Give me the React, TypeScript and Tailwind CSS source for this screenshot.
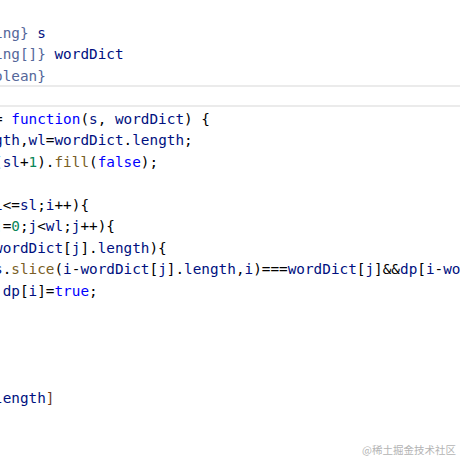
import React from 'react';

type Tok = [string, string];

const C = {
  kw: 'text-[#0000ff]',
  v: 'text-[#001080]',
  op: 'text-[#000000]',
  fn: 'text-[#795e26]',
  num: 'text-[#098658]',
  ty: 'text-[#55679a]',
  br: 'text-[#6b3a1a]',
};

// visible slice of the editor, starting one column left of the window
const lines: Tok[][] = [
  [],
  [['ing}', C.ty], [' ', C.op], ['s', C.v]],
  [['ing[]}', C.ty], [' ', C.op], ['wordDict', C.v]],
  [['olean}', C.ty]],
  [],
  [['= ', C.op], ['function', C.kw], ['(', C.op], ['s', C.v], [', ', C.op], ['wordDict', C.v], [') {', C.op]],
  [['gth', C.v], [',', C.op], ['wl', C.v], ['=', C.op], ['wordDict', C.v], ['.', C.op], ['length', C.v], [';', C.op]],
  [['(', C.op], ['sl', C.v], ['+', C.op], ['1', C.num], [').', C.op], ['fill', C.fn], ['(', C.op], ['false', C.kw], [');', C.op]],
  [],
  [['i', C.v], ['<=', C.op], ['sl', C.v], [';', C.op], ['i', C.v], ['++){', C.op]],
  [['j', C.v], ['=', C.op], ['0', C.num], [';', C.op], ['j', C.v], ['<', C.op], ['wl', C.v], [';', C.op], ['j', C.v], ['++){', C.op]],
  [['wordDict', C.v], ['[', C.op], ['j', C.v], ['].', C.op], ['length', C.v], ['){', C.op]],
  [
    ['s', C.v], ['.', C.op], ['slice', C.fn], ['(', C.op], ['i', C.v], ['-', C.op], ['wordDict', C.v], ['[', C.op], ['j', C.v],
    ['].', C.op], ['length', C.v], [',', C.op], ['i', C.v], [')===', C.op], ['wordDict', C.v], ['[', C.op], ['j', C.v],
    [']&&', C.op], ['dp', C.v], ['[', C.op], ['i', C.v], ['-', C.op], ['wordDict', C.v], ['[', C.op], ['j', C.v], ['].', C.op],
    ['length', C.v], [']){', C.op],
  ],
  [[' ', C.op], ['dp', C.v], ['[', C.op], ['i', C.v], [']=', C.op], ['true', C.kw], [';', C.op]],
  [],
  [],
  [],
  [],
  [['length', C.v], [']', C.br]],
];

export default function App() {
  return (
    <div className="relative w-[460px] h-[460px] overflow-hidden bg-white">
      <div className="-mt-[1px] font-['DejaVu_Sans_Mono',monospace] text-[14.35px]">
        {lines.map((toks, i) => (
          <div
            key={i}
            className={
              i === 4
                ? 'h-[21.5px] box-border border-y-2 border-[#ebebeb]'
                : 'h-[21.5px] box-border pt-[2px] leading-[21.5px] whitespace-pre -ml-[6px]'
            }>
            {toks.map(([t, c], j) => (
              <span key={j} className={c}>{t}</span>
            ))}
          </div>
        ))}
      </div>
      <div className="absolute right-[4px] bottom-[2px] text-[10.5px] text-[#b4b4b4] font-['Noto_Sans_CJK_SC',sans-serif]">
        @稀土掘金技术社区
      </div>
    </div>
  );
}
